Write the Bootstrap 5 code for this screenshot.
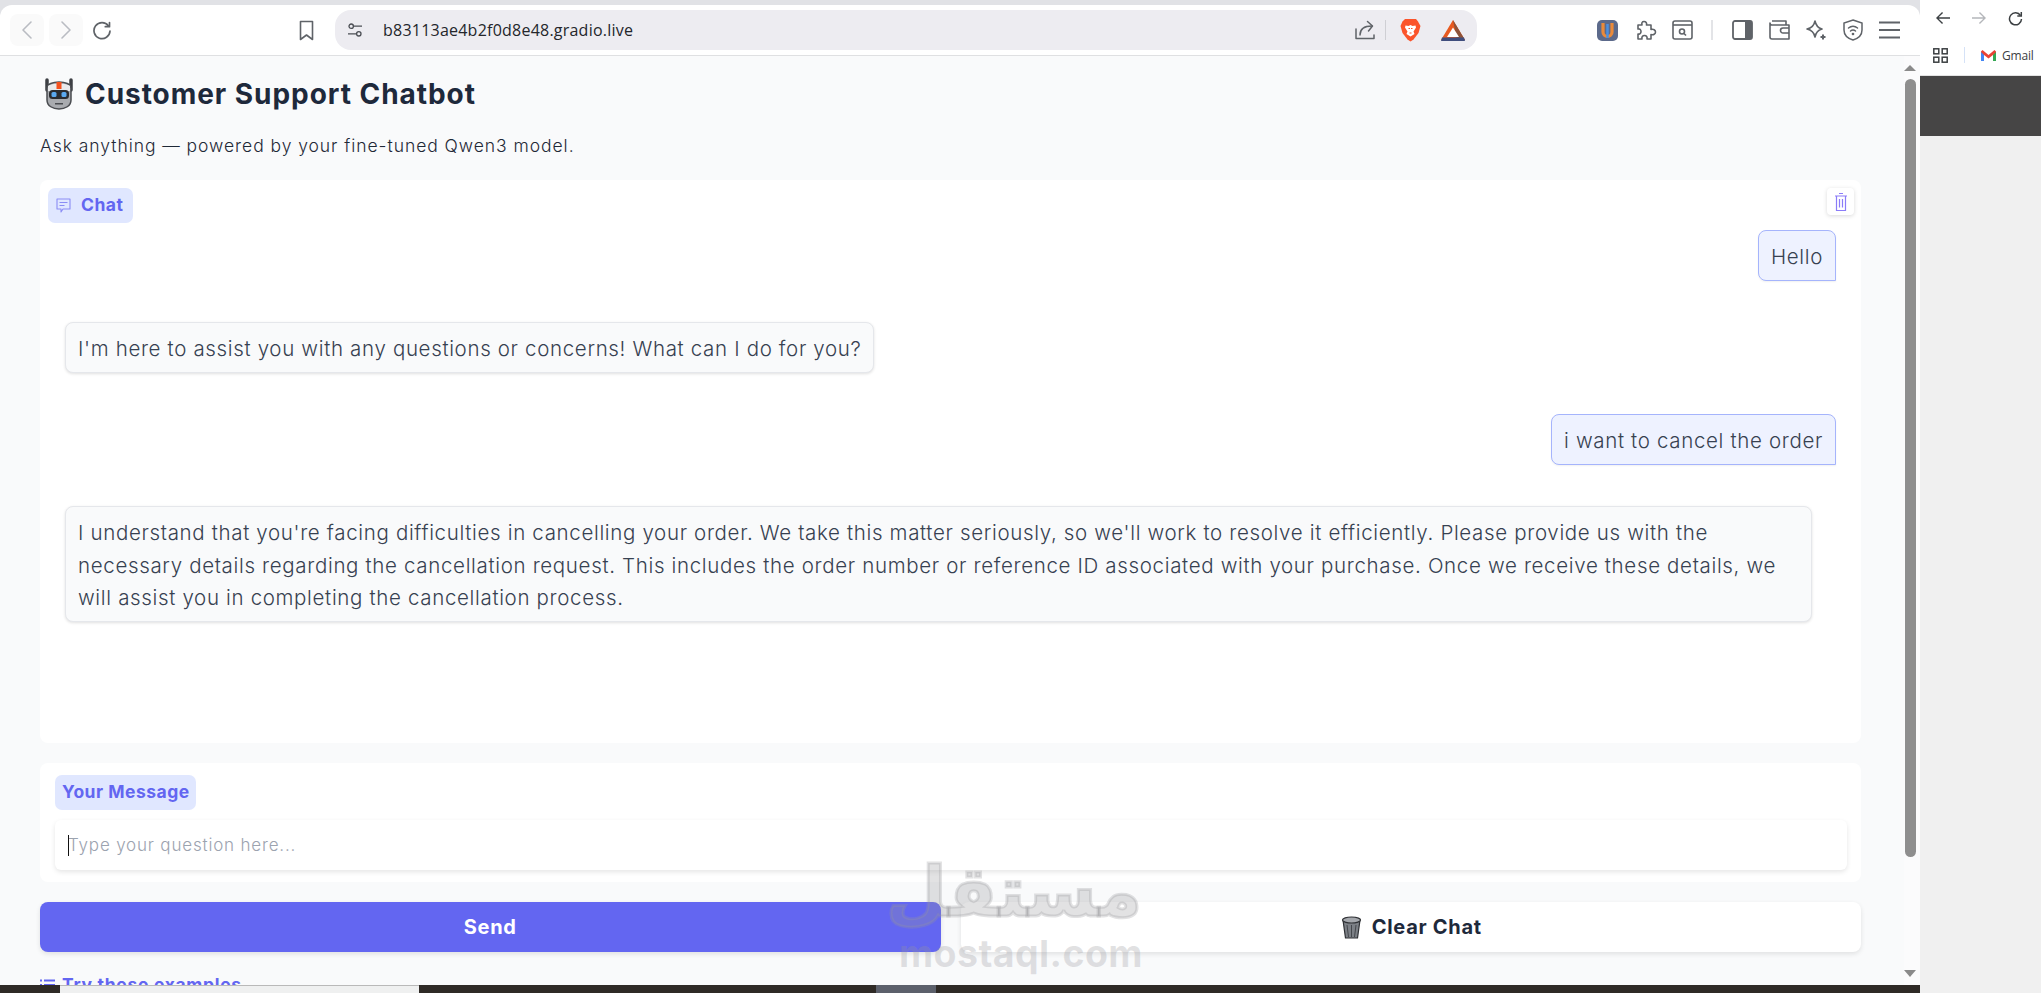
<!DOCTYPE html>
<html lang="en">
<head>
  <meta charset="UTF-8">
  <title>Customer Support Chatbot</title>
  <link href="https://cdn.jsdelivr.net/npm/bootstrap@5.3.0/dist/css/bootstrap.min.css" rel="stylesheet">
  <style>
    html, body { height: 100%; overflow: hidden; }
    body { background: #f0f0f0; font-family: Inter, sans-serif; color: #1f2937; }
    svg { flex: none; display: block; }

    /* browser chrome */
    .shot { height: 993px; }
    .win-col { width: 1920px; background: #e1e2e6; padding-top: 5px; }
    .side-col { width: 121px; }
    .tool-strip { height: 51px; background: #fff; border-bottom: 1px solid #dfe0e2; border-radius: 12px 12px 0 0; padding-left: 10px; }
    .nav-box { width: 34px; height: 32px; background: #fafafa; border-radius: 8px; margin-right: 5px; }
    .reload-ic { margin-left: 4px; }
    .mark-ic { margin-left: 187px; }
    .addr-bar { width: 1142px; height: 40px; margin-left: 21px; background: #edecf1; border-radius: 16px; padding: 0 12px 0 13px; }
    .addr-text { font: 400 16px "Open Sans", sans-serif; color: #24262b; margin-left: 21px; letter-spacing: .23px; }
    .addr-sep { width: 1px; height: 20px; background: #cfcfd4; margin: 0 14px 0 10px; }
    .tri-ic { margin-left: 20px; }
    .tool-right { margin-left: 120px; }
    .ext-ic { margin-right: 18px; }
    .puzzle-ic { margin-right: 15px; }
    .tool-sep { width: 2px; height: 20px; background: #e3e4e7; margin: 0 19px 0 18px; }

    .side-top { height: 76px; background: #fff; border-bottom: 1px solid #e3e3e3; padding: 4px 0 0 16px; }
    .side-row { height: 28px; }
    .side-row2 { margin: 9px 0 0 -3px; }
    .side-gap { margin-left: 22px; }
    .side-sep { width: 1px; height: 16px; background: #d5e2f7; margin: 0 16px 0 16px; }
    .gmail-txt { font: 400 12px "Open Sans", sans-serif; letter-spacing: -.2px; color: #3c4043; margin-left: 6px; }
    .side-dark { height: 60px; background: #464545; }

    /* page */
    .page-wrap { height: 929px; background: #f9fafb; overflow: hidden; }
    .page-body { width: 1904px; padding: 0 43px 0 40px; }
    .title-row { height: 74px; padding-top: 22px; margin-left: 3px; }
    .title-row h1 { font: 700 28px Inter, sans-serif; color: #1e293b; margin: -1px 0 0 10px; letter-spacing: .95px; }
    .sub-line { font: 300 17.5px Inter, sans-serif; color: #1f2937; height: 50px; padding-top: 5px; margin: 0; letter-spacing: .95px; }

    .chat-panel { height: 563px; background: #fff; border-radius: 8px; padding: 8px 25px 0 8px; position: relative; }
    .tag-box { background: #e0e7ff; color: #6366f1; border-radius: 7px; font-weight: 700; font-size: 17.5px; letter-spacing: .5px; height: 35px; padding: 0 8px; white-space: nowrap; }
    .tag-chat { width: 85px; margin-bottom: 7px; gap: 10px; }
    .clear-ic { position: absolute; top: 8px; right: 7px; width: 27px; height: 27px; background: #fff; border-radius: 4px; box-shadow: 0 1px 4px rgba(0,0,0,.15); }
    .msg-list { gap: 41.5px; padding-left: 17px; }
    .msg-bub { font: 300 20.5px/32.5px Inter, sans-serif; letter-spacing: .66px; color: #374151; padding: 10px 12px 6px; border-radius: 8px; }
    .msg-user { align-self: flex-end; background: #eef2ff; border: 1px solid #a5b4fc; border-bottom-right-radius: 0; box-shadow: 0 1px 2px rgba(0,0,0,.06); }
    .msg-bot { align-self: flex-start; background: #f9fafb; border: 1px solid #e5e7eb; box-shadow: 0 1px 3px rgba(0,0,0,.12); }
    .msg-wide { width: 1747px; }

    .input-panel { height: 119px; margin-top: 20px; background: #fff; border-radius: 8px; padding: 12px 14px 0 15px; }
    .tag-input { width: 141px; padding: 0 7px; margin-bottom: 10px; }
    .ask-input.form-control { height: 50px; border: 0; border-radius: 6px; box-shadow: 0 2px 5px rgba(0,0,0,.1); padding: 0 13px; font: 300 17px Inter, sans-serif; letter-spacing: .82px; color: #1f2937; }
    .ask-input.form-control::placeholder { color: #9ca3af; }
    .caret-bar { width: 1px; height: 21px; background: #111; position: absolute; left: 13px; top: 15px; }

    .act-row { --bs-gutter-x: 20px; margin-top: 20px; }
    .act-btn.btn { height: 50px; width: 100%; border: 0; border-radius: 8px; font: 700 20px Inter, sans-serif; letter-spacing: .7px; box-shadow: 0 2px 5px rgba(0,0,0,.1); }
    .act-send.btn { background: #6366f1; color: #fff; }
    .act-clear.btn { background: #fff; color: #1e293b; gap: 9px; }
    .try-line { color: #6366f1; font-weight: 700; font-size: 17.5px; letter-spacing: .7px; margin-top: 18px; gap: 7px; height: 30px; }

    /* scrollbar */
    .bar-col { width: 16px; background: #fbfbfc; padding-top: 9px; }
    .bar-up { width: 0; height: 0; border: 6.5px solid transparent; border-top: 0; border-bottom: 6px solid #8a8a8a; margin-bottom: 8px; }
    .bar-thumb { width: 11px; height: 778px; background: #8e8e8e; border-radius: 6px; margin-left: 1px; margin-bottom: 113px; }
    .bar-down { width: 0; height: 0; border: 6px solid transparent; border-bottom: 0; border-top: 7px solid #8a8a8a; }

    /* bottom strip */
    .under-strip { height: 8px; background: #2f2a26; }
    .strip-a { width: 359px; margin-left: 60px; background: #eff0f0; border-top: 1px solid #b9b9b9; }
    .strip-b { width: 60px; margin-left: 457px; background: #5c606b; }

    /* watermark */
    .wm-box { position: absolute; left: 899px; top: 850px; width: 243px; text-align: center; color: rgba(150,150,155,.28); pointer-events: none; }
    .wm-ar { font: 700 70px/84px "DejaVu Sans", sans-serif; padding-left: 8px; -webkit-text-stroke: 3px rgba(150,150,155,.28); paint-order: stroke fill; }
    .wm-en { font: 700 37.5px/40px Inter, sans-serif; letter-spacing: .4px; white-space: nowrap; }
  </style>
</head>
<body>
<div class="shot d-flex position-relative">

  <div class="win-col d-flex flex-column">
    <div class="tool-strip d-flex align-items-center">
      <div class="nav-box d-flex align-items-center justify-content-center">
        <svg width="14" height="20" viewBox="0 0 14 20" fill="none" stroke="#b9bcc2" stroke-width="1.6" stroke-linecap="round" stroke-linejoin="round"><path d="M11 2 3 10l8 8"/></svg>
      </div>
      <div class="nav-box d-flex align-items-center justify-content-center">
        <svg width="14" height="20" viewBox="0 0 14 20" fill="none" stroke="#b9bcc2" stroke-width="1.6" stroke-linecap="round" stroke-linejoin="round"><path d="m3 2 8 8-8 8"/></svg>
      </div>
      <svg class="reload-ic" width="20" height="20" viewBox="0 0 20 20" fill="none" stroke="#5f6368" stroke-width="1.7" stroke-linecap="round"><path d="M16.5 6A8 8 0 1 0 18 11"/><path d="M17.5 2.5v4.2h-4.2" stroke-linejoin="round"/></svg>
      <svg class="mark-ic" width="15" height="21" viewBox="0 0 15 21" fill="none" stroke="#5f6368" stroke-width="1.6" stroke-linejoin="round"><path d="M1.5 1.5h12v18l-6-4.5-6 4.5z"/></svg>

      <div class="addr-bar d-flex align-items-center">
        <svg width="14" height="14" viewBox="0 0 14 14" fill="none" stroke="#4b4e54" stroke-width="1.3"><circle cx="3.2" cy="3.2" r="2.2"/><path d="M5.5 3.2H14M0 10.8h8.3"/><circle cx="10.8" cy="10.8" r="2.2"/></svg>
        <span class="addr-text flex-grow-1">b83113ae4b2f0d8e48.gradio.live</span>
        <svg width="20" height="20" viewBox="0 0 20 20" fill="none" stroke="#5f6368" stroke-width="1.5" stroke-linecap="round" stroke-linejoin="round"><path d="M1 9v9.500h18V15"/><path d="M5 15c0-6 4-9 12-9"/><path d="M12.500 1.500 17.500 6l-4 5"/></svg>
        <div class="addr-sep"></div>
        <svg width="21" height="24" viewBox="0 0 21 24"><path d="M5 1h11l2 2.500L20.500 8l-2 7-5 6.500-3 2-3-2-5-6.500-2-7L2.500 3.500z" fill="#fb542b"/><path d="M5.500 7.500l3 .5 2-1 2 1 3-.5 .5 2-2.500 4 1 2.500-4 2.500-4-2.500 1-2.500-2.500-4z" fill="#fff"/><path d="M8.500 10.500h1.500M11 10.500h1.500M9.500 15h2" stroke="#fb542b" stroke-width="1.200"/></svg>
        <svg class="tri-ic" width="24" height="21" viewBox="0 0 24 21"><path d="M12 0 24 20H0z" fill="#e8591f"/><path d="M12 0 24 20H16z" fill="#8e5238"/><path d="M12 7.500 18 17H6z" fill="#fff"/><path d="M1 17.500h22L24 21H0z" fill="#3f4d7d"/></svg>
      </div>

      <div class="tool-right d-flex align-items-center">
        <svg class="ext-ic" width="21" height="21" viewBox="0 0 21 21"><rect width="21" height="21" rx="5" fill="#5c6a8b"/><path d="M6 3v9a4.500 4.500 0 0 0 9 0V3" fill="none" stroke="#ea8a3a" stroke-width="3.200"/><path d="M10.500 4v14" stroke="#4a90e2" stroke-width="2.500"/></svg>
        <svg class="puzzle-ic" width="21" height="21" viewBox="0 0 21 21" fill="none" stroke="#5f6368" stroke-width="1.600" stroke-linejoin="round"><path d="M8 1.500c2 0 3 1.500 2.500 3.500H15v4.500c2.500-.8 4.500 .5 4.500 2.500s-2 3.300-4.500 2.500v4.500h-4c.5-2-.5-3.500-2.500-3.500s-3 1.500-2.500 3.500H2v-5c2 .5 3-1 3-2.500S4 8.500 2 9V5h4C5.500 3 6 1.500 8 1.500z"/></svg>
        <svg width="21" height="20" viewBox="0 0 21 20" fill="none" stroke="#5f6368" stroke-width="1.600"><rect x="1" y="1" width="19" height="18" rx="2"/><path d="M1 5h19"/><circle cx="10" cy="11.500" r="2.500"/><path d="m12 13.500 2 2"/></svg>
        <div class="tool-sep"></div>
        <svg width="21" height="20" viewBox="0 0 21 20"><rect x="1" y="1" width="19" height="18" rx="2" fill="#fff" stroke="#5f6368" stroke-width="1.800"/><rect x="13" y="1" width="7" height="18" fill="#5f6368"/></svg>
        <svg class="ms-3" width="21" height="20" viewBox="0 0 21 20" fill="none" stroke="#5f6368" stroke-width="1.600" stroke-linejoin="round"><path d="M20 5H3a2 2 0 0 1-2-2v14a2 2 0 0 0 2 2h17z"/><path d="M3 1h14v4"/><path d="M20 8h-6a2.200 2.200 0 0 0 0 5h6"/></svg>
        <svg class="ms-3" width="21" height="21" viewBox="0 0 21 21" fill="none" stroke="#5f6368" stroke-width="1.600" stroke-linejoin="round"><path d="M9 1c1 5 3 7 7 8-4 1-6 3-7 8-1-5-3-7-8-8 5-1 7-3 8-8z"/><path d="M17 14.500v5M14.500 17h5" stroke-width="2"/></svg>
        <svg class="ms-3" width="20" height="22" viewBox="0 0 20 22" fill="none" stroke="#5f6368" stroke-width="1.500" stroke-linecap="round"><path d="M10 1 19 4v7c0 5-4 8.500-9 10-5-1.500-9-5-9-10V4z"/><path d="M5.500 9a7 7 0 0 1 9 0M7.500 12a4 4 0 0 1 5 0"/><circle cx="10" cy="15" r=".6"/></svg>
        <svg class="ms-3" width="21" height="18" viewBox="0 0 21 18" fill="none" stroke="#5f6368" stroke-width="1.800"><path d="M0 1.500h21M0 9h21M0 16.500h21"/></svg>
      </div>
    </div>

    <div class="page-wrap d-flex">
      <div class="page-body">
        <div class="title-row d-flex align-items-start">
          <svg width="32" height="32" viewBox="0 0 32 32">
            <path d="M4 2v10M28 2v10" stroke="#3d3f44" stroke-width="3.500" stroke-linecap="round"/>
            <path d="M4 10c0-4 6-6 12-6s12 2 12 6v12c0 6-6 9-12 9S4 28 4 22z" fill="#a9abaf" stroke="#4a4c50" stroke-width="1.500"/>
            <path d="M5 8c3-3 19-3 22 0v5H5z" fill="#e9eaec"/>
            <rect x="13.500" y="4" width="5" height="7" fill="#f4511e"/>
            <rect x="6" y="12" width="20" height="9" rx="3.500" fill="#2b2d31"/>
            <rect x="8.500" y="14" width="5" height="5" rx="1.500" fill="#5aa9f0"/>
            <rect x="18.500" y="14" width="5" height="5" rx="1.500" fill="#5aa9f0"/>
            <rect x="12" y="25" width="8" height="1.500" fill="#4a4c50"/>
          </svg>
          <h1>Customer Support Chatbot</h1>
        </div>
        <p class="sub-line">Ask anything — powered by your fine-tuned Qwen3 model.</p>

        <div class="chat-panel">
          <div class="tag-box tag-chat d-flex align-items-center">
            <svg width="15" height="15" viewBox="0 0 15 15" fill="none" stroke="#8b8df5" stroke-width="1.100" stroke-linejoin="round"><path d="M1 1h13v10H7l-2 3v-3H1z"/><path d="M3.500 4.500h8M3.500 7.500h5"/></svg>
            Chat
          </div>
          <div class="clear-ic d-flex align-items-center justify-content-center">
            <svg width="14" height="20" viewBox="0 0 14 20" fill="none" stroke="#8b7cf8" stroke-width="1.200"><path d="M1 4h12M5 1.500h4M2.500 4v14.500h9V4M5.500 7v8.500M8.500 7v8.500"/></svg>
          </div>
          <div class="msg-list d-flex flex-column">
            <div class="msg-bub msg-user">Hello</div>
            <div class="msg-bub msg-bot">I'm here to assist you with any questions or concerns! What can I do for you?</div>
            <div class="msg-bub msg-user">i want to cancel the order</div>
            <div class="msg-bub msg-bot msg-wide">I understand that you're facing difficulties in cancelling your order. We take this matter seriously, so we'll work to resolve it efficiently. Please provide us with the<br>necessary details regarding the cancellation request. This includes the order number or reference ID associated with your purchase. Once we receive these details, we<br>will assist you in completing the cancellation process.</div>
          </div>
        </div>

        <div class="input-panel">
          <div class="tag-box tag-input d-flex align-items-center">Your Message</div>
          <div class="position-relative">
            <input class="form-control ask-input" type="text" placeholder="Type your question here...">
            <div class="caret-bar"></div>
          </div>
        </div>

        <div class="row act-row">
          <div class="col-6"><button class="btn act-btn act-send" type="button">Send</button></div>
          <div class="col-6">
            <button class="btn act-btn act-clear d-flex align-items-center justify-content-center" type="button">
              <svg width="23" height="23" viewBox="0 0 23 23"><path d="M3 4h17l-2.500 18h-12z" fill="#7c8086" stroke="#2f3135" stroke-width="1.200"/><ellipse cx="11.500" cy="4" rx="9" ry="3" fill="#a5a8ad" stroke="#2f3135" stroke-width="1.200"/><path d="M7 9l1.500 12M11.500 9v12M16 9l-1.500 12" stroke="#44474c" stroke-width="1"/></svg>
              Clear Chat
            </button>
          </div>
        </div>

        <div class="try-line d-flex align-items-center">
          <svg width="15" height="12" viewBox="0 0 15 12" fill="none" stroke="#6366f1" stroke-width="1.800"><path d="M0 1.500h2M4 1.500h11M0 6h2M4 6h11M0 10.500h2M4 10.500h11"/></svg>
          Try these examples
        </div>
      </div>
      <div class="bar-col">
        <div class="bar-up"></div>
        <div class="bar-thumb"></div>
        <div class="bar-down"></div>
      </div>
    </div>

    <div class="under-strip d-flex">
      <div class="strip-a"></div>
      <div class="strip-b"></div>
    </div>
  </div>

  <div class="side-col d-flex flex-column">
    <div class="side-top">
      <div class="side-row d-flex align-items-center">
        <svg width="14" height="14" viewBox="0 0 15 14" fill="none" stroke="#3c4043" stroke-width="1.500"><path d="M15 7H1.500M7 1 1 7l6 6"/></svg>
        <svg class="side-gap" width="14" height="14" viewBox="0 0 15 14" fill="none" stroke="#b4b6ba" stroke-width="1.500"><path d="M0 7h13.500M8 1l6 6-6 6"/></svg>
        <svg class="side-gap" width="15" height="15" viewBox="0 0 15 15" fill="none" stroke="#3c4043" stroke-width="1.500"><path d="M12.500 4.500A6 6 0 1 0 13.500 8"/><path d="M13.300 1v4h-4"/></svg>
      </div>
      <div class="side-row side-row2 d-flex align-items-center">
        <svg width="15" height="15" viewBox="0 0 15 15" fill="none" stroke="#3c4043" stroke-width="1.500"><rect x=".8" y=".8" width="5" height="5"/><rect x="9.200" y=".8" width="5" height="5"/><rect x=".8" y="9.200" width="5" height="5"/><rect x="9.200" y="9.200" width="5" height="5"/></svg>
        <div class="side-sep"></div>
        <svg width="15" height="11" viewBox="0 0 15 11"><path d="M0 1.500 1.500 0 7.500 5 13.500 0 15 1.500V11h-3V5L7.500 8.500 3 5v6H0z" fill="#ea4335"/><path d="M0 2v9h3V5z" fill="#4285f4"/><path d="M15 2v9h-3V5z" fill="#34a853"/></svg>
        <span class="gmail-txt">Gmail</span>
      </div>
    </div>
    <div class="side-dark"></div>
  </div>

  <div class="wm-box">
    <div class="wm-ar" dir="rtl" lang="ar">مستقل</div>
    <div class="wm-en">mostaql.com</div>
  </div>
</div>
<script src="https://cdn.jsdelivr.net/npm/bootstrap@5.3.0/dist/js/bootstrap.bundle.min.js"></script>
</body>
</html>
